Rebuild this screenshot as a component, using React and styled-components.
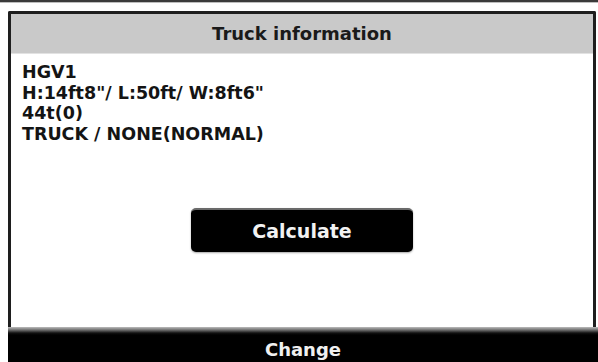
import React from 'react';
import styled, { createGlobalStyle } from 'styled-components';

const GlobalStyle = createGlobalStyle`
  html, body {
    margin: 0;
    padding: 0;
    background: #ffffff;
    overflow: hidden;
  }
  body {
    font-family: "DejaVu Sans", Verdana, sans-serif;
    font-weight: 700;
    color: #111;
  }
`;

const Screen = styled.div`
  width: 598px;
  height: 362px;
  display: flex;
  flex-direction: column;
  background: #fff;
`;

const TopRule = styled.div`
  height: 2px;
  background: #3a3a3a;
  border-bottom: 1px solid #bdbdbd;
`;

const Frame = styled.div`
  flex: 1;
  display: flex;
  padding: 8px 2px 0 8px;
`;

const Panel = styled.section`
  flex: 1;
  display: flex;
  flex-direction: column;
  border: 3px solid #1e1e1e;
  border-bottom: none;
  border-radius: 2px 2px 0 0;
  background: #fff;
`;

const Header = styled.h2`
  margin: 0;
  height: 39px;
  display: flex;
  align-items: center;
  justify-content: center;
  background: #c9c9c9;
  border-bottom: 1px solid #e2e2e2;
  font-size: 18px;
  font-weight: 700;
  color: #1a1a1a;
`;

const Info = styled.div`
  padding: 8px 11px 0;
  font-size: 17.5px;
  line-height: 20.7px;
  color: #141414;
`;

const Line = styled.div`
  white-space: nowrap;
`;

const Actions = styled.div`
  flex: 1;
  display: flex;
  justify-content: center;
  padding: 63px 0 0 0;
`;

const Button = styled.button`
  width: 222px;
  height: 44px;
  border: none;
  border-top: 2px solid #6a6a6a;
  border-radius: 5px;
  background: #000;
  color: #f2f2f2;
  font-family: "DejaVu Sans", Verdana, sans-serif;
  font-weight: 700;
  font-size: 19px;
  box-shadow: 0 1px 2px rgba(0, 0, 0, 0.35);
  cursor: pointer;
`;

const ChangeBar = styled.div`
  margin-left: 8px;
  height: 35px;
  box-sizing: border-box;
  background: linear-gradient(#bcbcbc 0, #6e6e6e 3px, #111 6px, #000 8px);
  display: flex;
  justify-content: center;
  align-items: flex-end;
  padding-bottom: 1px;
  color: #f0f0f0;
  font-size: 18px;
  font-weight: 700;
  line-height: 22px;
`;

const lines = [
  'HGV1',
  'H:14ft8"/ L:50ft/ W:8ft6"',
  '44t(0)',
  'TRUCK / NONE(NORMAL)',
];

export default function App() {
  return (
    <Screen>
      <GlobalStyle />
      <TopRule />
      <Frame>
        <Panel>
          <Header>Truck information</Header>
          <Info>
            {lines.map((l) => (
              <Line key={l}>{l}</Line>
            ))}
          </Info>
          <Actions>
            <Button>Calculate</Button>
          </Actions>
        </Panel>
      </Frame>
      <ChangeBar>Change</ChangeBar>
    </Screen>
  );
}
